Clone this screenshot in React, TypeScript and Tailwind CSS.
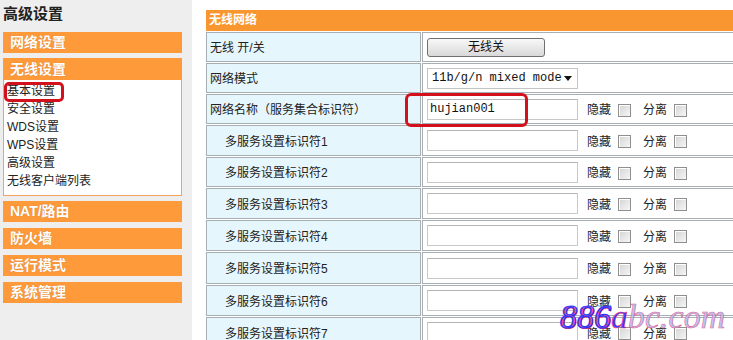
import React from "react";

const rows: { label: string; indent: boolean; h: string; kind: string; value?: string }[] = [
  { label: "无线 开/关", indent: false, h: "h-[30px]", kind: "button" },
  { label: "网络模式", indent: false, h: "h-[30px]", kind: "select" },
  { label: "网络名称（服务集合标识符）", indent: false, h: "h-[30px]", kind: "input", value: "hujian001" },
  { label: "多服务设置标识符1", indent: true, h: "h-[31px]", kind: "input" },
  { label: "多服务设置标识符2", indent: true, h: "h-[30px]", kind: "input" },
  { label: "多服务设置标识符3", indent: true, h: "h-[31px]", kind: "input" },
  { label: "多服务设置标识符4", indent: true, h: "h-[31px]", kind: "input" },
  { label: "多服务设置标识符5", indent: true, h: "h-[32px]", kind: "input" },
  { label: "多服务设置标识符6", indent: true, h: "h-[31px]", kind: "input" },
  { label: "多服务设置标识符7", indent: true, h: "h-[31px]", kind: "input" },
];

function Checkbox() {
  return (
    <span className="inline-block w-[13px] h-[13px] border border-[#8f8f8f] bg-gradient-to-br from-[#d4d4d4] to-[#f6f6f6] shadow-[inset_1px_1px_0_#ffffff]" />
  );
}

function Bar({ text, className }: { text: string; className?: string }) {
  return (
    <div
      className={
        "h-[21px] bg-[#fe9a3a] text-white font-bold text-[14px] leading-[21px] pl-[7px] [text-shadow:0_0_1px_#c8742a] " +
        (className ?? "")
      }
    >
      {text}
    </div>
  );
}

export default function App() {
  const font = "font-['Liberation_Sans','Noto_Sans_CJK_SC',sans-serif]";
  return (
    <div className={"relative w-[733px] h-[340px] overflow-hidden flex bg-white " + font}>
      {/* Sidebar */}
      <div className="w-[192px] shrink-0 bg-[#eeeeee] pl-[3px] pr-[10px]">
        <div className="mt-[3px] h-[21px] leading-[21px] text-[15px] font-bold text-[#222]">高级设置</div>
        <Bar text="网络设置" className="mt-[8px]" />
        <Bar text="无线设置" className="mt-[5px] h-[22px] leading-[22px]" />
        <div className="h-[116px] bg-white border border-t-0 border-[#f3a45a] pl-[3px] pt-[2px] text-[12px] leading-[18px] text-[#222]">
          <div>基本设置</div>
          <div>安全设置</div>
          <div>WDS设置</div>
          <div>WPS设置</div>
          <div>高级设置</div>
          <div>无线客户端列表</div>
        </div>
        <Bar text="NAT/路由" className="mt-[5px]" />
        <Bar text="防火墙" className="mt-[6px]" />
        <Bar text="运行模式" className="mt-[6px]" />
        <Bar text="系统管理" className="mt-[6px]" />
      </div>

      {/* Main */}
      <div className="flex-1 pl-[14px] pt-[10px]">
        <div className="w-[560px] flex flex-col gap-[1px]">
          <div className="h-[21px] bg-[#f9962f] text-white font-bold text-[12px] leading-[21px] pl-[3px]">无线网络</div>
          {rows.map((r, i) => (
            <div key={i} className={"flex gap-[1px] " + r.h}>
              <div
                className={
                  "w-[215px] shrink-0 border border-[#a7aeb4] bg-[#e6f6fd] flex items-center pt-[2px] text-[12px] text-[#222] " +
                  (r.indent ? "pl-[18px]" : "pl-[3px]")
                }
              >
                {r.label}
              </div>
              <div className="flex-1 border border-[#a7aeb4] bg-white flex items-center pl-[4px]">
                {r.kind === "button" && (
                  <div className="w-[118px] h-[19px] border border-[#707070] rounded-[3px] bg-gradient-to-b from-[#f8f8f8] to-[#d9d9d9] flex items-center justify-center text-[12px] text-[#111]">
                    无线关
                  </div>
                )}
                {r.kind === "select" && (
                  <div className="w-[151px] h-[21px] border border-[#c4c4c4] flex items-center pl-[4px] pr-[5px] font-['Liberation_Mono',monospace] text-[12px] text-[#111]">
                    <span className="flex-1">11b/g/n mixed mode</span>
                    <svg width="8" height="5" viewBox="0 0 8 5">
                      <path d="M0 0 L8 0 L4 5 Z" fill="#111" />
                    </svg>
                  </div>
                )}
                {r.kind === "input" && (
                  <>
                    <div className="w-[151px] h-[21px] border border-[#c9c9c9] border-t-[#b5b5b5] flex items-center pl-[2px] font-['Liberation_Mono',monospace] text-[12px] text-[#111]">
                      {r.value ?? ""}
                    </div>
                    <div className="flex items-center pt-[2px] text-[12px] text-[#222]">
                      <span className="ml-[9px]">隐藏</span>
                      <span className="ml-[7px] flex"><Checkbox /></span>
                      <span className="ml-[12px]">分离</span>
                      <span className="ml-[7px] flex"><Checkbox /></span>
                    </div>
                  </>
                )}
              </div>
            </div>
          ))}
        </div>
      </div>

      {/* Annotations */}
      <div className="absolute left-[4px] top-[82px] w-[60px] h-[20px] border-[3px] border-[#d3111c] rounded-[5px]" />
      <div className="absolute left-[405px] top-[93px] w-[123px] h-[34px] border-[3px] border-[#d3111c] rounded-[6px]" />

      {/* Watermark */}
      <div className="absolute left-[560px] top-[296px] italic font-['Liberation_Serif',serif] text-[34px] leading-[42px] whitespace-nowrap">
        <span className="text-[#f0507e] [-webkit-text-stroke:1.2px_#2a38ff] [text-shadow:1px_1px_0_#ff3060]">886</span>
        <span className="text-[#2f40ff] [-webkit-text-stroke:0.6px_#ff3a6a]">a</span>
        <span className="text-[#a9c0f2] opacity-90 [-webkit-text-stroke:0.6px_#e8508a]">bc.com</span>
      </div>
    </div>
  );
}
